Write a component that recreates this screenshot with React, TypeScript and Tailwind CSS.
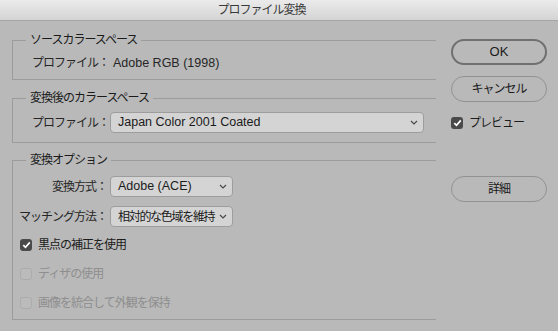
const jp = 'text-[12px] tracking-[-1px]';

const Chevron = () => (
  <svg width="8" height="5" viewBox="0 0 8 5" className="shrink-0">
    <path d="M1 1 L4 4 L7 1" fill="none" stroke="#4a4a4a" strokeWidth="1.2" />
  </svg>
);

const Select = ({ value, width, latin }: { value: string; width: string; latin?: boolean }) => (
  <div
    className={`${width} h-[21px] flex items-center justify-between pl-[7px] pr-[5px] bg-[#d4d4d4] border border-[#9d9d9d] rounded-[4px] text-[#1a1a1a]`}
  >
    <span className={`whitespace-nowrap ${latin ? 'text-[12.5px]' : 'text-[12px] tracking-[-1.3px]'}`}>{value}</span>
    <Chevron />
  </div>
);

const Check = ({ checked, disabled, label }: { checked?: boolean; disabled?: boolean; label: string }) => (
  <div className="flex items-center h-[16px] gap-[6px]">
    {checked ? (
      <div className="w-[12px] h-[12px] rounded-[3px] bg-[#4a4a4a] flex items-center justify-center">
        <svg width="9" height="8" viewBox="0 0 9 8">
          <path d="M1.3 4.2 L3.5 6.3 L7.8 1.4" fill="none" stroke="#ffffff" strokeWidth="1.7" />
        </svg>
      </div>
    ) : (
      <div className="w-[12px] h-[12px] rounded-[3px] border border-[#acacac] bg-[#bbbbbb]" />
    )}
    <span className={`${jp} ${disabled ? 'text-[#8e8e8e]' : 'text-[#1c1c1c]'}`}>{label}</span>
  </div>
);

const Group = ({ title, children }: { title: string; children: React.ReactNode }) => (
  <fieldset className="w-[424px] border-l border-y border-[#9c9c9c] px-0 m-0">
    <legend className={`ml-[13px] px-[4px] leading-[16px] text-[#1a1a1a] ${jp}`}>{title}</legend>
    {children}
  </fieldset>
);

const Button = ({ label, primary, latin }: { label: string; primary?: boolean; latin?: boolean }) => (
  <div
    className={`w-[96px] h-[26px] rounded-full flex items-center justify-center text-[#1a1a1a] ${
      primary ? 'border-2 border-[#707070]' : 'border-[1.5px] border-[#929292]'
    } ${latin ? 'text-[13px]' : jp}`}
  >
    {label}
  </div>
);

export default function App() {
  return (
    <div
      className="w-[558px] h-[331px] bg-[#b9b9b9] overflow-hidden text-[#262626]"
      style={{ fontFamily: '"Liberation Sans", "Noto Sans CJK JP", sans-serif' }}
    >
      {/* Title bar */}
      <div className="h-[21px] flex items-center justify-center pr-[35px] bg-gradient-to-b from-[#ebebeb] to-[#d4d4d4] border-b border-[#a6a6a6]">
        <span className={`${jp} text-[#3a3a3a]`}>プロファイル変換</span>
      </div>

      <div className="flex">
        {/* Left column */}
        <div className="ml-[12px] flex flex-col">
          <div className="mt-[11px]">
            <Group title="ソースカラースペース">
              <div className="flex items-center h-[16px] pl-[19px] mt-[7px] mb-[8px]">
                <span className={`w-[81px] ${jp}`}>プロファイル：</span>
                <span className="text-[12.5px]">Adobe RGB (1998)</span>
              </div>
            </Group>
          </div>

          <div className="mt-[10px]">
            <Group title="変換後のカラースペース">
              <div className="flex items-center pl-[19px] mt-[6px] mb-[9px]">
                <span className={`w-[78px] ${jp}`}>プロファイル：</span>
                <Select value="Japan Color 2001 Coated" width="w-[314px]" latin />
              </div>
            </Group>
          </div>

          <div className="mt-[9px]">
            <Group title="変換オプション">
              <div className="flex flex-col mt-[8px] mb-[8px]">
                <div className="flex items-center">
                  <span className={`w-[97px] text-right pr-[3px] ${jp}`}>変換方式：</span>
                  <Select value="Adobe (ACE)" width="w-[123px]" latin />
                </div>
                <div className="flex items-center mt-[9px]">
                  <span className={`w-[97px] text-right pr-[3px] whitespace-nowrap ${jp}`}>マッチング方法：</span>
                  <Select value="相対的な色域を維持" width="w-[123px]" />
                </div>
                <div className="flex flex-col gap-[13px] pl-[7px] mt-[10px]">
                  <Check checked label="黒点の補正を使用" />
                  <Check disabled label="ディザの使用" />
                  <Check disabled label="画像を統合して外観を保持" />
                </div>
              </div>
            </Group>
          </div>
        </div>

        {/* Right column */}
        <div className="ml-[15px] mt-[18px] flex flex-col">
          <Button label="OK" primary latin />
          <div className="mt-[11px]">
            <Button label="キャンセル" />
          </div>
          <div className="mt-[13px]">
            <Check checked label="プレビュー" />
          </div>
          <div className="mt-[45px]">
            <Button label="詳細" />
          </div>
        </div>
      </div>
    </div>
  );
}
